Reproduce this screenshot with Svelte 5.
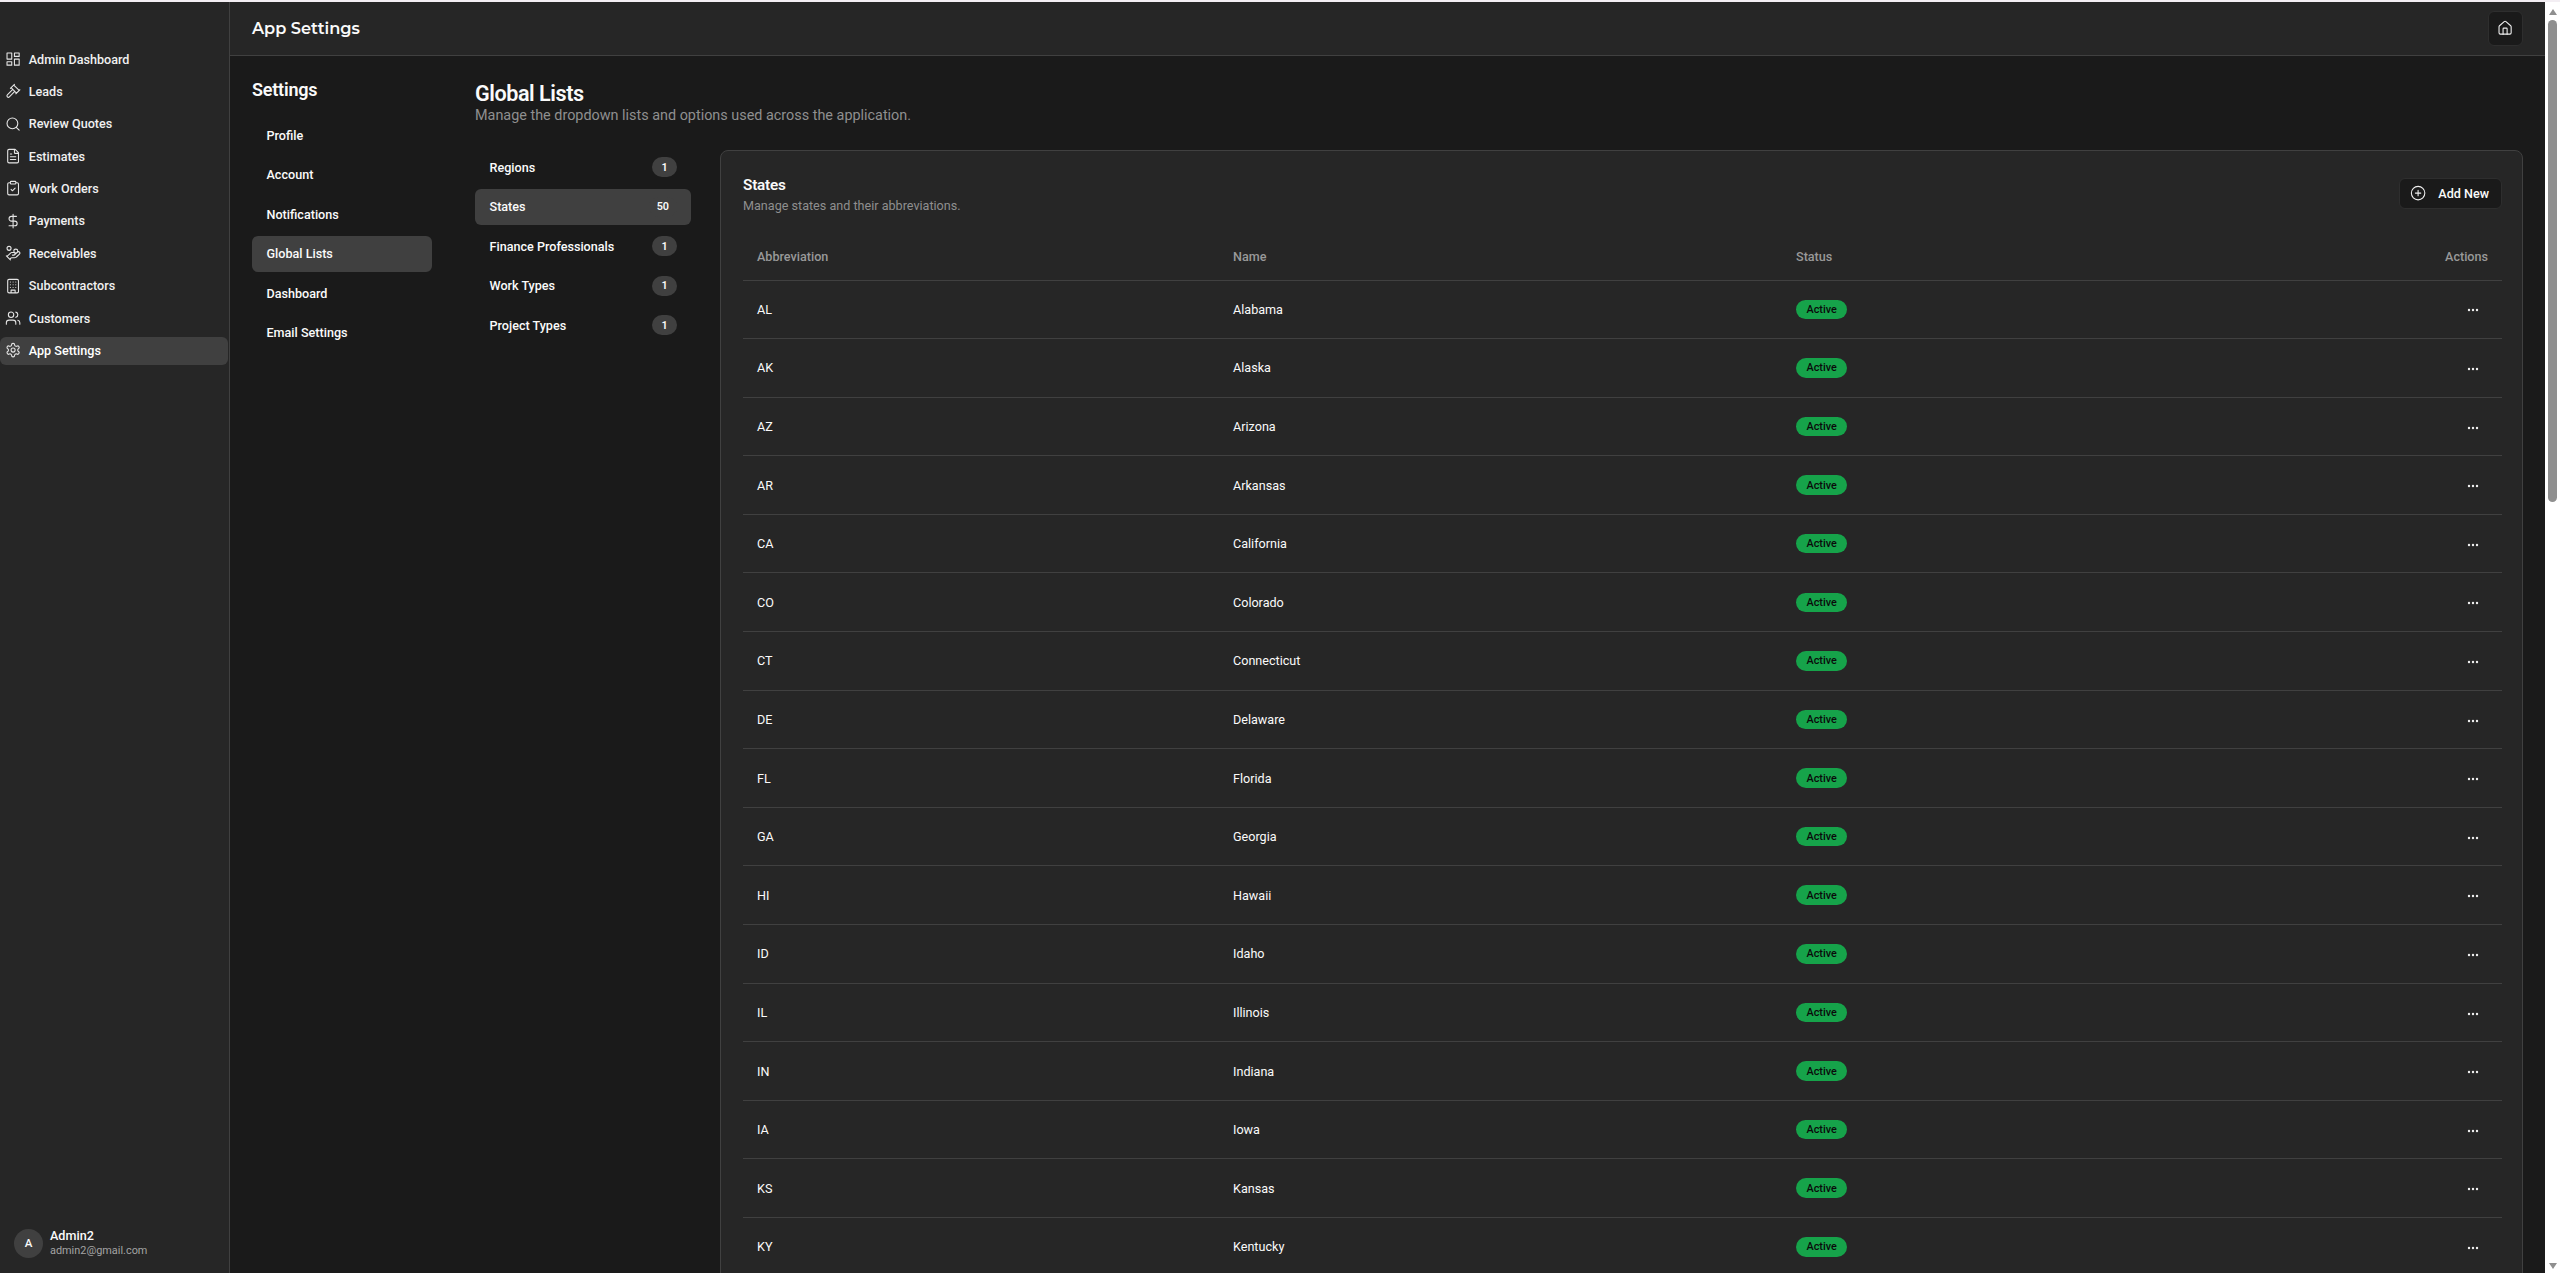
<script>
  const navItems = [
    { label: 'Admin Dashboard', icon: 'dash' },
    { label: 'Leads', icon: 'gavel' },
    { label: 'Review Quotes', icon: 'search' },
    { label: 'Estimates', icon: 'file' },
    { label: 'Work Orders', icon: 'clip' },
    { label: 'Payments', icon: 'dollar' },
    { label: 'Receivables', icon: 'hand' },
    { label: 'Subcontractors', icon: 'building' },
    { label: 'Customers', icon: 'users' },
    { label: 'App Settings', icon: 'gear', active: true }
  ]

  const iconPaths = {
    dash: 'M3 3h7v9H3zM14 3h7v5h-7zM14 12h7v9h-7zM3 16h7v5H3z',
    gavel: 'm14.5 12.5-8 8a2.12 2.12 0 1 1-3-3l8-8M16 16l6-6M8 8l6-6M9 7l8 8M21 11l-8-8',
    search: 'M11 3a8 8 0 1 0 0 16 8 8 0 0 0 0-16zM21 21l-4.3-4.3',
    file: 'M15 2H6a2 2 0 0 0-2 2v16a2 2 0 0 0 2 2h12a2 2 0 0 0 2-2V7zM14 2v5a1 1 0 0 0 1 1h5M8 13h8M8 17h8M8 9h2',
    clip: 'M9 2h6a1 1 0 0 1 1 1v2a1 1 0 0 1-1 1H9a1 1 0 0 1-1-1V3a1 1 0 0 1 1-1zM16 4h2a2 2 0 0 1 2 2v14a2 2 0 0 1-2 2H6a2 2 0 0 1-2-2V6a2 2 0 0 1 2-2h2M9 14l2 2 4-4',
    dollar: 'M12 2v20M17 5H9.5a3.5 3.5 0 0 0 0 7h5a3.5 3.5 0 0 1 0 7H6',
    hand: 'M11 15h2a2 2 0 1 0 0-4h-3c-.6 0-1.1.2-1.4.6L3 17M7 21l1.6-1.4c.3-.4.8-.6 1.4-.6h4c1.1 0 2.1-.4 2.8-1.2l4.6-4.4a2 2 0 0 0-2.75-2.91l-4.2 3.9M2 16l6 6M18.9 9a2.9 2.9 0 1 0-5.8 0 2.9 2.9 0 0 0 5.8 0zM9 5a3 3 0 1 0-6 0 3 3 0 0 0 6 0z',
    building: 'M6 2h12a2 2 0 0 1 2 2v16a2 2 0 0 1-2 2H6a2 2 0 0 1-2-2V4a2 2 0 0 1 2-2zM9 22v-4h6v4M8 6h.01M16 6h.01M12 6h.01M12 10h.01M12 14h.01M16 10h.01M16 14h.01M8 10h.01M8 14h.01',
    users: 'M16 21v-2a4 4 0 0 0-4-4H6a4 4 0 0 0-4 4v2M9 11a4 4 0 1 0 0-8 4 4 0 0 0 0 8zM22 21v-2a4 4 0 0 0-3-3.87M16 3.13a4 4 0 0 1 0 7.75',
    gear: 'M12.22 2h-.44a2 2 0 0 0-2 2v.18a2 2 0 0 1-1 1.73l-.43.25a2 2 0 0 1-2 0l-.15-.08a2 2 0 0 0-2.73.73l-.22.38a2 2 0 0 0 .73 2.73l.15.1a2 2 0 0 1 1 1.72v.51a2 2 0 0 1-1 1.74l-.15.09a2 2 0 0 0-.73 2.73l.22.38a2 2 0 0 0 2.73.73l.15-.08a2 2 0 0 1 2 0l.43.25a2 2 0 0 1 1 1.73V20a2 2 0 0 0 2 2h.44a2 2 0 0 0 2-2v-.18a2 2 0 0 1 1-1.73l.43-.25a2 2 0 0 1 2 0l.15.08a2 2 0 0 0 2.73-.73l.22-.39a2 2 0 0 0-.73-2.73l-.15-.08a2 2 0 0 1-1-1.74v-.5a2 2 0 0 1 1-1.74l.15-.09a2 2 0 0 0 .73-2.73l-.22-.38a2 2 0 0 0-2.73-.73l-.15.08a2 2 0 0 1-2 0l-.43-.25a2 2 0 0 1-1-1.73V4a2 2 0 0 0-2-2zM12 9a3 3 0 1 0 0 6 3 3 0 0 0 0-6z'
  }

  const settingsNav = ['Profile', 'Account', 'Notifications', 'Global Lists', 'Dashboard', 'Email Settings']

  const lists = [
    { label: 'Regions', count: 1 },
    { label: 'States', count: 50, active: true },
    { label: 'Finance Professionals', count: 1 },
    { label: 'Work Types', count: 1 },
    { label: 'Project Types', count: 1 }
  ]

  const states = [
    ['AL', 'Alabama'], ['AK', 'Alaska'], ['AZ', 'Arizona'], ['AR', 'Arkansas'], ['CA', 'California'],
    ['CO', 'Colorado'], ['CT', 'Connecticut'], ['DE', 'Delaware'], ['FL', 'Florida'], ['GA', 'Georgia'],
    ['HI', 'Hawaii'], ['ID', 'Idaho'], ['IL', 'Illinois'], ['IN', 'Indiana'], ['IA', 'Iowa'],
    ['KS', 'Kansas'], ['KY', 'Kentucky']
  ]
</script>

<div class="app">
  <aside class="sidebar">
    <nav class="side-nav">
      {#each navItems as item}
        <a class="side-item" class:active={item.active} href="#top">
          <svg class="side-icon" viewBox="0 0 24 24"><path d={iconPaths[item.icon]} /></svg>
          <span>{item.label}</span>
        </a>
      {/each}
    </nav>
    <div class="user">
      <div class="avatar">A</div>
      <div>
        <div class="user-name">Admin2</div>
        <div class="user-mail">admin2@gmail.com</div>
      </div>
    </div>
  </aside>

  <div class="main">
    <header class="topbar">
      <h1>App Settings</h1>
      <button class="home" aria-label="Home">
        <svg viewBox="0 0 24 24"><path d="M15 21v-8a1 1 0 0 0-1-1h-4a1 1 0 0 0-1 1v8" /><path d="M3 10a2 2 0 0 1 .7-1.5l7-6a2 2 0 0 1 2.6 0l7 6A2 2 0 0 1 21 10v9a2 2 0 0 1-2 2H5a2 2 0 0 1-2-2z" /></svg>
      </button>
    </header>

    <div class="body">
      <section class="settings">
        <h2>Settings</h2>
        <div class="settings-nav">
          {#each settingsNav as label}
            <a class="settings-item" class:active={label === 'Global Lists'} href="#top">{label}</a>
          {/each}
        </div>
      </section>

      <section class="content">
        <h2>Global Lists</h2>
        <p class="lead">Manage the dropdown lists and options used across the application.</p>

        <div class="split">
          <div class="lists">
            {#each lists as list}
              <a class="list-item" class:active={list.active} href="#top">
                <span>{list.label}</span>
                <span class="count">{list.count}</span>
              </a>
            {/each}
          </div>

          <div class="card">
            <div class="card-head">
              <div>
                <h3>States</h3>
                <p>Manage states and their abbreviations.</p>
              </div>
              <button class="add">
                <svg viewBox="0 0 24 24"><circle cx="12" cy="12" r="10" /><path d="M8 12h8M12 8v8" /></svg>
                <span>Add New</span>
              </button>
            </div>

            <table>
              <thead>
                <tr>
                  <th class="c-abbr">Abbreviation</th>
                  <th class="c-name">Name</th>
                  <th class="c-status">Status</th>
                  <th class="c-actions">Actions</th>
                </tr>
              </thead>
              <tbody>
                {#each states as [abbr, name]}
                  <tr>
                    <td>{abbr}</td>
                    <td>{name}</td>
                    <td><span class="badge">Active</span></td>
                    <td class="c-actions">
                      <svg class="more" viewBox="0 0 12 4"><circle cx="2" cy="2" r="1.2" /><circle cx="6" cy="2" r="1.2" /><circle cx="10" cy="2" r="1.2" /></svg>
                    </td>
                  </tr>
                {/each}
              </tbody>
            </table>
          </div>
        </div>
      </section>
    </div>
  </div>

  <div class="scrollbar">
    <div class="arrow up"></div>
    <div class="thumb"></div>
    <div class="arrow down"></div>
  </div>
</div>

<style>
  :global(body) {
    margin: 0;
    background: #1a1a1a;
    overflow: hidden;
  }

  * {
    box-sizing: border-box;
  }

  h1, h2, h3, p {
    margin: 0;
  }

  a {
    color: inherit;
    text-decoration: none;
  }

  .app {
    display: flex;
    height: 100vh;
    overflow: hidden;
    border-top: 2px solid #f3eef3;
    background: #1a1a1a;
    color: #fafafa;
    font-family: Roboto, "Liberation Sans", sans-serif;
    font-size: 12.6px;
  }

  .sidebar {
    width: 230px;
    flex: none;
    display: flex;
    flex-direction: column;
    justify-content: space-between;
    background: #262626;
    border-right: 1px solid #404040;
    padding: 43px 1px 15px 0;
  }

  .side-nav {
    display: flex;
    flex-direction: column;
    gap: 4.4px;
  }

  .side-item {
    display: flex;
    align-items: center;
    gap: 7.2px;
    height: 28px;
    padding-left: 5.4px;
    border-radius: 6px;
    font-size: 12.6px;
    font-weight: 500;
    color: #f0f0f0;
  }

  .side-item.active {
    background: #404040;
    color: #fff;
  }

  .side-icon {
    width: 16.2px;
    height: 16.2px;
    flex: none;
    fill: none;
    stroke: #e5e5e5;
    stroke-width: 1.6;
    stroke-linecap: round;
    stroke-linejoin: round;
  }

  .user {
    display: flex;
    align-items: center;
    gap: 7px;
    padding-left: 14px;
  }

  .avatar {
    width: 29px;
    height: 29px;
    border-radius: 50%;
    background: #404040;
    display: grid;
    place-items: center;
    font-size: 11.5px;
    font-weight: 500;
  }

  .user-name {
    font-size: 12.6px;
    font-weight: 500;
    line-height: 15px;
  }

  .user-mail {
    font-size: 10.9px;
    line-height: 15px;
    color: #a3a3a3;
  }

  .main {
    flex: 1;
    min-width: 0;
    display: flex;
    flex-direction: column;
  }

  .topbar {
    flex: none;
    height: 54px;
    display: flex;
    align-items: center;
    justify-content: space-between;
    padding: 0 22px;
    background: #262626;
    border-bottom: 1px solid #404040;
  }

  .topbar h1 {
    font-family: Montserrat, "Open Sans", Inter, sans-serif;
    font-size: 16.2px;
    font-weight: 600;
    margin-top: -1px;
  }

  .home {
    width: 35px;
    height: 35px;
    display: grid;
    place-items: center;
    padding: 0;
    background: #1a1a1a;
    border: 1px solid #2e2e2e;
    border-radius: 6px;
  }

  .home svg {
    width: 16.2px;
    height: 16.2px;
    fill: none;
    stroke: #f0f0f0;
    stroke-width: 1.6;
    stroke-linecap: round;
    stroke-linejoin: round;
  }

  .body {
    flex: 1;
    min-height: 0;
    display: flex;
    padding: 24px 22px 0;
  }

  .settings {
    width: 180px;
    flex: none;
    margin-right: 43px;
  }

  .settings h2 {
    font-size: 18px;
    font-weight: 600;
    line-height: 22px;
    margin-top: -1px;
    margin-bottom: 16px;
    letter-spacing: -0.2px;
  }

  .settings-nav {
    display: flex;
    flex-direction: column;
    gap: 3.6px;
  }

  .settings-item {
    display: flex;
    align-items: center;
    height: 36px;
    padding-left: 14.5px;
    border-radius: 6px;
    font-weight: 500;
    font-size: 12.6px;
  }

  .settings-item.active {
    background: #404040;
  }

  .content {
    flex: 1;
    min-width: 0;
  }

  .content > h2 {
    font-size: 21.6px;
    font-weight: 600;
    line-height: 27px;
    letter-spacing: -0.45px;
  }

  .lead {
    font-size: 14.4px;
    line-height: 18px;
    color: #8f8f8f;
    margin-bottom: 25px;
  }

  .split {
    display: flex;
    gap: 29px;
    align-items: flex-start;
  }

  .lists {
    width: 216px;
    flex: none;
    display: flex;
    flex-direction: column;
    gap: 3.6px;
    margin-top: -1px;
  }

  .list-item {
    display: flex;
    align-items: center;
    justify-content: space-between;
    height: 36px;
    padding: 0 14px 0 14.5px;
    border-radius: 6px;
    font-weight: 500;
    font-size: 12.6px;
  }

  .list-item.active {
    background: #404040;
  }

  .count {
    min-width: 25px;
    height: 20px;
    padding: 0 8px;
    border-radius: 10px;
    background: #404040;
    display: grid;
    place-items: center;
    font-size: 10.8px;
    font-weight: 600;
  }

  .card {
    flex: 1;
    min-width: 0;
    background: #262626;
    border: 1px solid #404040;
    border-radius: 8px;
    padding: 24px 20px 24px 22px;
  }

  .card-head {
    display: flex;
    align-items: flex-start;
    justify-content: space-between;
  }

  .card-head h3 {
    font-size: 15.3px;
    font-weight: 600;
    line-height: 20px;
    letter-spacing: -0.2px;
    margin-bottom: 2px;
  }

  .card-head p {
    font-size: 12.6px;
    line-height: 18px;
    color: #8f8f8f;
  }

  .add {
    display: flex;
    align-items: center;
    gap: 12px;
    height: 31px;
    margin-top: 3px;
    padding: 0 12px 0 10px;
    background: #1a1a1a;
    border: 1px solid #2e2e2e;
    border-radius: 6px;
    color: #fafafa;
    font-family: inherit;
    font-size: 12.6px;
    font-weight: 500;
  }

  .add svg {
    width: 16.2px;
    height: 16.2px;
    fill: none;
    stroke: #f0f0f0;
    stroke-width: 1.6;
    stroke-linecap: round;
  }

  table {
    width: 100%;
    border-collapse: collapse;
    table-layout: fixed;
    margin-top: 19px;
  }

  th {
    height: 46px;
    padding: 0 14px;
    text-align: left;
    font-weight: 500;
    font-size: 12.6px;
    color: #999;
    border-bottom: 1px solid #404040;
  }

  td {
    height: 58.6px;
    padding: 0 14px;
    font-size: 12.6px;
    border-bottom: 1px solid #404040;
  }

  .c-abbr {
    width: 476px;
  }

  .c-name {
    width: 563px;
  }

  .c-actions {
    text-align: right;
  }

  .badge {
    display: inline-flex;
    align-items: center;
    height: 19.5px;
    padding: 0 10.5px;
    border-radius: 10px;
    background: #16a34a;
    color: #0a0a0a;
    font-size: 10.8px;
    font-weight: 500;
  }

  .more {
    display: inline-block;
    vertical-align: middle;
    width: 12px;
    height: 4px;
    fill: #f0f0f0;
    margin-right: 9px;
  }

  .scrollbar {
    width: 15px;
    flex: none;
    display: flex;
    flex-direction: column;
    align-items: center;
    background: #fff;
    padding: 7px 0 4px;
  }

  .arrow {
    width: 0;
    height: 0;
    flex: none;
    border-left: 4.5px solid transparent;
    border-right: 4.5px solid transparent;
  }

  .arrow.up {
    border-bottom: 6px solid #8f8f8f;
  }

  .arrow.down {
    margin-top: auto;
    border-top: 6px solid #8f8f8f;
  }

  .thumb {
    width: 9px;
    height: 482px;
    margin-top: 5px;
    border-radius: 5px;
    background: #8f8f8f;
  }
</style>
